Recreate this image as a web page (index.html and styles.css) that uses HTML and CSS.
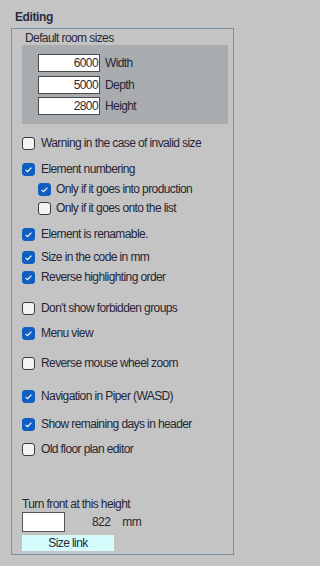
FILE: index.html
```html
<!DOCTYPE html>
<html>
<head>
<meta charset="utf-8">
<link rel="stylesheet" href="styles.css">
</head>
<body>
<div class="page">
  <div class="title">Editing</div>
  <div class="frame">
    <div class="caption">Default room sizes</div>
    <div class="panel">
      <div class="size-row"><div class="num">6000</div><span>Width</span></div>
      <div class="size-row"><div class="num">5000</div><span>Depth</span></div>
      <div class="size-row"><div class="num">2800</div><span>Height</span></div>
    </div>
    <div class="checks">
      <div class="row m13"><span class="box"></span><span>Warning in the case of invalid size</span></div>
      <div class="row m13"><span class="box on"><svg viewBox="0 0 13 13"><path d="M3.6 6.8 L5.6 8.7 L9.4 4.6"/></svg></span><span>Element numbering</span></div>
      <div class="row sub m7"><span class="box on"><svg viewBox="0 0 13 13"><path d="M3.6 6.8 L5.6 8.7 L9.4 4.6"/></svg></span><span>Only if it goes into production</span></div>
      <div class="row sub m6"><span class="box"></span><span>Only if it goes onto the list</span></div>
      <div class="row m13"><span class="box on"><svg viewBox="0 0 13 13"><path d="M3.6 6.8 L5.6 8.7 L9.4 4.6"/></svg></span><span>Element is renamable.</span></div>
      <div class="row m10"><span class="box on"><svg viewBox="0 0 13 13"><path d="M3.6 6.8 L5.6 8.7 L9.4 4.6"/></svg></span><span>Size in the code in mm</span></div>
      <div class="row m7"><span class="box on"><svg viewBox="0 0 13 13"><path d="M3.6 6.8 L5.6 8.7 L9.4 4.6"/></svg></span><span>Reverse highlighting order</span></div>
      <div class="row m18"><span class="box"></span><span>Don't show forbidden groups</span></div>
      <div class="row m12"><span class="box on"><svg viewBox="0 0 13 13"><path d="M3.6 6.8 L5.6 8.7 L9.4 4.6"/></svg></span><span>Menu view</span></div>
      <div class="row m17"><span class="box"></span><span>Reverse mouse wheel zoom</span></div>
      <div class="row m20"><span class="box on"><svg viewBox="0 0 13 13"><path d="M3.6 6.8 L5.6 8.7 L9.4 4.6"/></svg></span><span>Navigation in Piper (WASD)</span></div>
      <div class="row m15"><span class="box on"><svg viewBox="0 0 13 13"><path d="M3.6 6.8 L5.6 8.7 L9.4 4.6"/></svg></span><span>Show remaining days in header</span></div>
      <div class="row m12"><span class="box"></span><span>Old floor plan editor</span></div>
    </div>
    <div class="bottom">
      <div class="turn">Turn front at this height</div>
      <div class="height-row">
        <div class="field"></div>
        <span class="val">822</span>
        <span class="unit">mm</span>
      </div>
      <div class="link">Size link</div>
    </div>
  </div>
</div>
</body>
</html>
```

FILE: styles.css
```css
html, body {
  margin: 0;
  padding: 0;
  background: #c4c4c4;
}
body {
  font-family: "Liberation Sans", Arial, sans-serif;
  font-size: 12px;
  letter-spacing: -0.6px;
  color: #262638;
}
.page {
  width: 242px;
  height: 566px;
  padding-top: 10px;
  box-sizing: border-box;
}
.title {
  margin-left: 15px;
  font-weight: bold;
  line-height: 14px;
  letter-spacing: -0.4px;
  color: #2a2a40;
}
.frame {
  margin: 4px 0 0 11px;
  width: 223px;
  height: 527px;
  box-sizing: border-box;
  border: 1px solid #7790a4;
  padding: 2px 4px 3px 10px;
  display: flex;
  flex-direction: column;
}
.caption {
  margin-left: 3px;
  line-height: 14px;
}
.panel {
  width: 206px;
  height: 79px;
  box-sizing: border-box;
  background: #a9acae;
  padding: 9px 0 0 16px;
  display: flex;
  flex-direction: column;
  gap: 3.5px;
}
.size-row {
  display: flex;
  align-items: center;
  height: 18px;
}
.num {
  width: 62px;
  height: 18px;
  box-sizing: border-box;
  border: 1px solid #4a4a4a;
  background: #fff;
  text-align: right;
  padding-right: 1px;
  line-height: 16px;
  color: #2a2a3a;
}
.size-row span {
  margin-left: 5px;
}
.checks {
  display: flex;
  flex-direction: column;
}
.row {
  display: flex;
  align-items: center;
  height: 13px;
  gap: 6px;
  line-height: 13px;
  white-space: nowrap;
}
.row.sub {
  margin-left: 16px;
  gap: 5px;
}
.box {
  width: 13px;
  height: 13px;
  box-sizing: border-box;
  border: 1px solid #3a3a3a;
  border-radius: 3px;
  background: #f3f3f3;
  flex: none;
  display: flex;
}
.box.on {
  background: #0f5fc2;
  border-color: #0f5fc2;
}
.box svg {
  width: 13px;
  height: 13px;
  margin: -1px;
  fill: none;
  stroke: #fff;
  stroke-width: 1.1;
}
.m6 { margin-top: 6px; }
.m7 { margin-top: 7px; }
.m10 { margin-top: 10px; }
.m12 { margin-top: 12px; }
.m13 { margin-top: 13px; }
.m15 { margin-top: 15px; }
.m17 { margin-top: 17px; }
.m18 { margin-top: 18px; }
.m20 { margin-top: 20px; }
.bottom {
  margin-top: auto;
  display: flex;
  flex-direction: column;
}
.turn {
  line-height: 14px;
}
.height-row {
  margin-top: 1px;
  display: flex;
  align-items: center;
  height: 20px;
}
.field {
  width: 43px;
  height: 20px;
  box-sizing: border-box;
  border: 1px solid #555;
  background: #fff;
}
.val {
  margin-left: 27px;
}
.unit {
  margin-left: 12px;
}
.link {
  margin-top: 3px;
  width: 92px;
  height: 16px;
  background: #d4fcfc;
  text-align: center;
  line-height: 16px;
}
```
